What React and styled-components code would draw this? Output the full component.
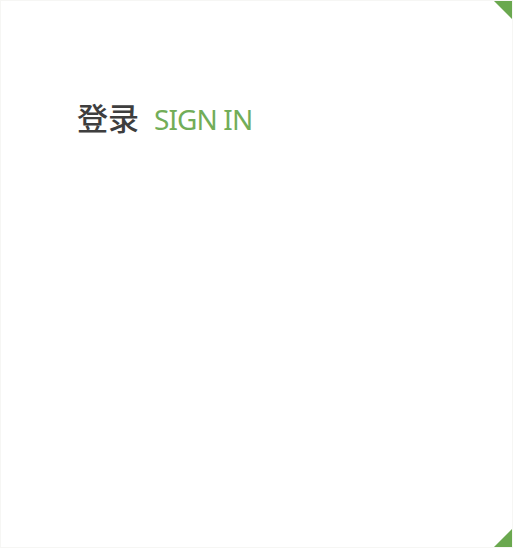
import React from "react";
import styled, { createGlobalStyle } from "styled-components";

const Global = createGlobalStyle`
  html, body { margin: 0; padding: 0; background: #ffffff; }
  body { font-family: "Noto Sans", "Noto Sans CJK SC", sans-serif; }
`;

const Card = styled.div`
  position: relative;
  box-sizing: border-box;
  width: 513px;
  height: 548px;
  background: #ffffff;
  border: 1px solid #f6f6f4;
  padding: 96px 0 0 76px;
`;

const Corner = styled.div`
  position: absolute;
  right: 0;
  width: 18px;
  height: 18px;
  background: #6aa84f;
  ${(p) =>
    p.$bottom
      ? `bottom: 0; clip-path: polygon(100% 0, 100% 100%, 0 100%);`
      : `top: 0; clip-path: polygon(0 0, 100% 0, 100% 100%);`}
`;

const Title = styled.h1`
  margin: 0;
  display: flex;
  align-items: baseline;
  gap: 15px;
  font-weight: normal;
`;

const Zh = styled.span`
  font-family: "Noto Sans CJK SC", sans-serif;
  font-size: 31px;
  font-weight: 500;
  color: #3e3e3e;
  line-height: 1.3;
`;

const En = styled.span`
  font-family: "Noto Sans", sans-serif;
  font-size: 28px;
  color: #72ad58;
  letter-spacing: -0.9px;
`;

export default function App() {
  return (
    <>
      <Global />
      <Card>
        <Corner />
        <Corner $bottom />
        <Title>
          <Zh>登录</Zh>
          <En>SIGN IN</En>
        </Title>
      </Card>
    </>
  );
}
